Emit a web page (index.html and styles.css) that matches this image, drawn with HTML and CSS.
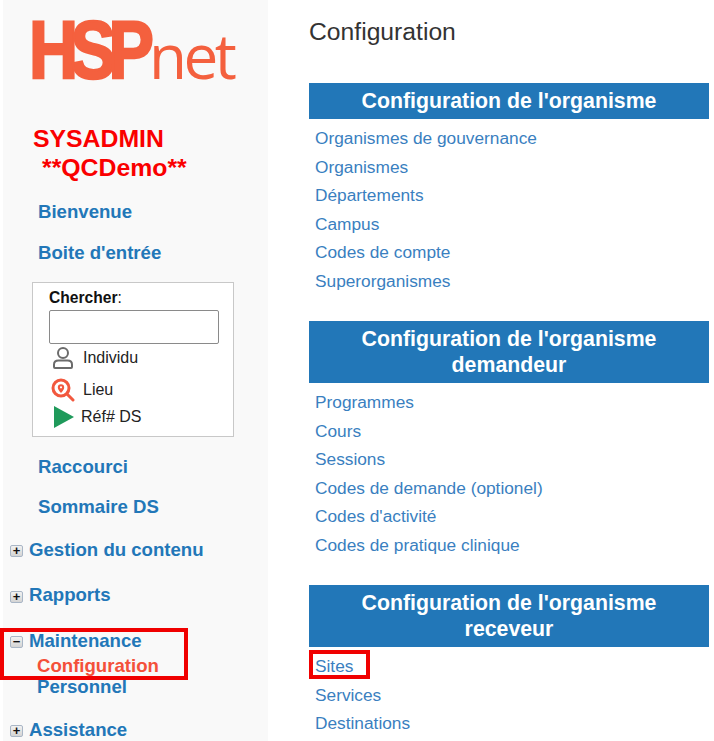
FILE: index.html
```html
<!DOCTYPE html>
<html lang="fr">
<head>
  <meta charset="UTF-8">
  <title>Configuration</title>
  <link rel="stylesheet" href="styles.css">
</head>
<body>
  <div class="page">
    <aside class="sidebar">
      <svg class="logo" width="245" height="98" viewBox="0 0 245 98">
        <text class="logo-bold" transform="translate(26 78) scale(.84 1)">HSP</text>
        <text class="logo-thin" x="146" y="79">net</text>
      </svg>

      <div class="user">
        <div>SYSADMIN</div>
        <div class="user-org">**QCDemo**</div>
      </div>

      <a class="nav-link first" href="#">Bienvenue</a>
      <a class="nav-link" href="#">Boite d'entrée</a>

      <div class="search">
        <label class="search-label" for="q"><b>Chercher</b>:</label>
        <input class="search-input" type="text" id="q">
        <div class="search-opt opt-person">
          <svg width="24" height="24" viewBox="0 0 24 24" fill="none" stroke="#6b6b6b" stroke-width="2">
            <circle cx="12" cy="7" r="5"/>
            <path d="M3 21v-2.5c0-2.5 2-4 4.500-4h9c2.500 0 4.500 1.500 4.500 4V21c0 .6-.4 1-1 1H4c-.6 0-1-.4-1-1z"/>
          </svg>
          <span>Individu</span>
        </div>
        <div class="search-opt opt-place">
          <svg width="24" height="24" viewBox="0 0 24 24" fill="none" stroke="#f2583e" stroke-width="3">
            <circle cx="10" cy="10" r="8"/>
            <path d="M16 16l6 6" stroke-linecap="round"/>
            <path d="M10 15c-2-2.500-3.200-4-3.200-5.600a3.200 3.200 0 0 1 6.400 0c0 1.600-1.200 3.100-3.200 5.600z" fill="#f2583e" stroke="none"/>
            <circle cx="10" cy="9.300" r="1.100" fill="white" stroke="none"/>
          </svg>
          <span>Lieu</span>
        </div>
        <div class="search-opt opt-ref">
          <svg width="22" height="24" viewBox="0 0 22 24">
            <path d="M1 1l20 11L1 23z" fill="#1f9a5b"/>
          </svg>
          <span>Réf# DS</span>
        </div>
      </div>

      <a class="nav-link" href="#">Raccourci</a>
      <a class="nav-link" href="#">Sommaire DS</a>

      <div class="tree">
        <div class="tree-item">
          <span class="toggle">+</span><a href="#">Gestion du contenu</a>
        </div>
        <div class="tree-item">
          <span class="toggle">+</span><a href="#">Rapports</a>
        </div>
        <div class="tree-item">
          <span class="toggle">&minus;</span><a href="#">Maintenance</a>
        </div>
        <a class="tree-sub current" href="#">Configuration</a>
        <a class="tree-sub" href="#">Personnel</a>
        <div class="tree-item">
          <span class="toggle">+</span><a href="#">Assistance</a>
        </div>
      </div>

      <div class="mark mark-nav"></div>
    </aside>

    <main class="content">
      <h1>Configuration</h1>

      <section class="block">
        <h2>Configuration de l'organisme</h2>
        <ul>
          <li><a href="#">Organismes de gouvernance</a></li>
          <li><a href="#">Organismes</a></li>
          <li><a href="#">Départements</a></li>
          <li><a href="#">Campus</a></li>
          <li><a href="#">Codes de compte</a></li>
          <li><a href="#">Superorganismes</a></li>
        </ul>
      </section>

      <section class="block">
        <h2>Configuration de l'organisme demandeur</h2>
        <ul>
          <li><a href="#">Programmes</a></li>
          <li><a href="#">Cours</a></li>
          <li><a href="#">Sessions</a></li>
          <li><a href="#">Codes de demande (optionel)</a></li>
          <li><a href="#">Codes d'activité</a></li>
          <li><a href="#">Codes de pratique clinique</a></li>
        </ul>
      </section>

      <section class="block">
        <h2>Configuration de l'organisme receveur</h2>
        <ul>
          <li class="marked"><a href="#">Sites</a><div class="mark mark-site"></div></li>
          <li><a href="#">Services</a></li>
          <li><a href="#">Destinations</a></li>
        </ul>
      </section>
    </main>
  </div>
</body>
</html>
```

FILE: styles.css
```css
html, body {
  margin: 0;
  padding: 0;
  height: 741px;
  overflow: hidden;
  background: white;
}

body {
  font-family: 'Liberation Sans', Arial, sans-serif;
}

a {
  color: #2277b8;
  text-decoration: none;
}

.page {
  display: flex;
  height: 741px;
}

/* left menu */
.sidebar {
  position: relative;
  width: 265px;
  margin-left: 3px;
  flex-shrink: 0;
  background-color: #f9f9f9;
}

.logo {
  display: block;
}

.logo-bold {
  font-family: 'Liberation Sans', sans-serif;
  font-weight: bold;
  font-size: 81px;
  letter-spacing: -9px;
  fill: #f4603e;
  stroke: #f4603e;
  stroke-width: 2.500px;
}

.logo-thin {
  font-family: 'Open Sans', sans-serif;
  font-size: 62px;
  letter-spacing: -3.500px;
  fill: #f4603e;
}

.user {
  margin: 27px 0 0 30px;
  color: #fa0000;
  font-weight: bold;
  font-size: 24.800px;
  line-height: 28.600px;
}

.user-org {
  margin-left: 9px;
}

.nav-link {
  display: block;
  margin-left: 35px;
  margin-top: 17.500px;
  font-weight: bold;
  font-size: 18.600px;
  line-height: 23px;
}

.nav-link.first {
  margin-top: 18px;
}

.search {
  height: 155px;
  margin: 18px 0 18px 29px;
  padding: 0 0 0 16px;
  box-sizing: border-box;
  width: 202px;
  background: white;
  border: 1px solid #c8c8c8;
}

.search-label {
  display: block;
  margin-top: 6px;
  font-size: 15.600px;
  line-height: 18px;
  color: #111;
}

.search-input {
  display: block;
  width: 170px;
  height: 34px;
  margin-top: 3px;
  padding: 0;
  box-sizing: border-box;
  background: white;
  border: 1px solid #8a8a8a;
  border-radius: 2px;
}

.search-opt {
  display: flex;
  align-items: center;
  font-size: 16px;
  color: #222;
}

.opt-person {
  gap: 8px;
  margin-top: 2px;
  padding-left: 2px;
}

.opt-place {
  gap: 8px;
  margin-top: 8px;
  padding-left: 2px;
}

.opt-ref {
  gap: 6px;
  margin-top: 3px;
  padding-left: 4px;
}

.tree-item {
  display: flex;
  align-items: center;
  height: 23px;
  margin-top: 22.500px;
  margin-left: 7px;
  font-weight: bold;
  font-size: 18.600px;
}

.tree > .tree-item:first-child {
  margin-top: 20px;
}

.toggle {
  display: block;
  width: 13px;
  height: 12px;
  margin-right: 6px;
  margin-top: 3px;
  box-sizing: border-box;
  background: linear-gradient(#f2f2f2, #d4d4d4);
  border: 1px solid #a9b6c6;
  border-radius: 2px;
  color: #111;
  font-size: 13px;
  line-height: 9px;
  text-align: center;
}

.tree-sub {
  display: block;
  margin-left: 34px;
  font-weight: bold;
  font-size: 18.600px;
  line-height: 22px;
}

.tree-sub.current {
  color: #f4503a;
  margin-top: 3px;
  line-height: 21px;
}

.tree-sub + .tree-item {
  margin-top: 20px;
}

/* red highlight boxes drawn on top of the screenshot */
.mark {
  position: absolute;
  box-sizing: border-box;
  border: 4px solid #f00000;
}

.mark-nav {
  left: -3px;
  top: 628px;
  width: 188px;
  height: 52px;
}

.mark-site {
  left: -6px;
  top: -2px;
  width: 61px;
  height: 29px;
}

/* right content */
.content {
  flex: 1;
  padding: 0 5px 0 41px;
}

h1 {
  margin: 18px 0 0 0;
  font-weight: normal;
  font-size: 24.700px;
  line-height: 27px;
  color: #333;
}

.block {
  margin-top: 25.500px;
}

h1 + .block {
  margin-top: 38px;
}

h2 {
  margin: 0;
  padding: 5px 10px 5px;
  background-color: #2277b8;
  color: white;
  font-size: 21.300px;
  line-height: 26px;
  text-align: center;
}

ul {
  list-style: none;
  margin: 0;
  padding: 5px 0 0 6px;
}

li {
  position: relative;
  height: 28.600px;
  font-size: 17.300px;
  line-height: 28px;
}

li a {
  color: #3a7fbf;
}
```
